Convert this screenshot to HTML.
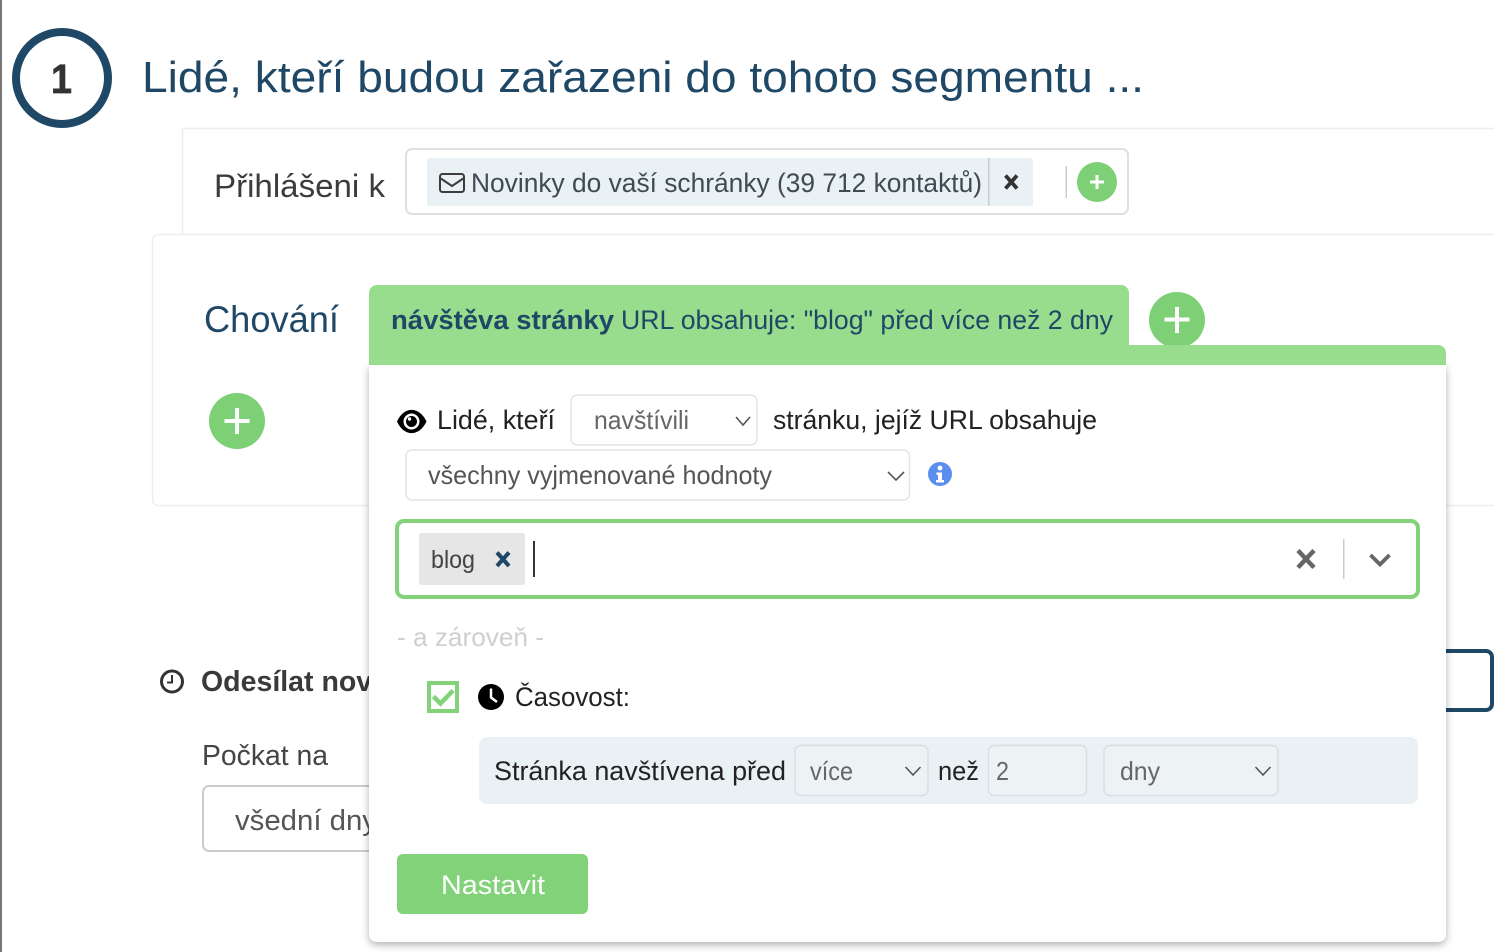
<!DOCTYPE html>
<html lang="cs">
<head>
<meta charset="utf-8">
<title>Segment</title>
<style>
html,body{margin:0;padding:0;background:#fff;width:1494px;height:952px;overflow:hidden}
svg{display:block}
text{font-family:"Liberation Sans",sans-serif}
</style>
</head>
<body>
<svg xmlns="http://www.w3.org/2000/svg" width="1494" height="952" viewBox="0 0 1494 952">
<defs>
<filter id="sh" x="-5%" y="-5%" width="110%" height="110%">
<feDropShadow dx="0" dy="3" stdDeviation="4" flood-color="#000" flood-opacity=".3"/>
</filter>
</defs>
<rect width="1494" height="952" fill="#fff"/>
<rect x="0" y="0" width="2" height="952" fill="#777"/>

<circle cx="62" cy="78" r="46" fill="none" stroke="#1f4766" stroke-width="8"/>
<text x="51" y="93" font-size="41" font-weight="700" fill="#333" stroke="#333" stroke-width=".7" textLength="21" lengthAdjust="spacingAndGlyphs">1</text>
<text x="142" y="92" font-size="44" fill="#1f4766" textLength="1002" lengthAdjust="spacingAndGlyphs">Lidé, kteří budou zařazeni do tohoto segmentu ...</text>

<path d="M1494 128.500H182.500V234" fill="none" stroke="#eee" stroke-width="1.500"/>
<text x="214" y="197" font-size="32" fill="#3c3c3c" textLength="171" lengthAdjust="spacingAndGlyphs">Přihlášeni k</text>
<rect x="406" y="149" width="722" height="65" rx="6" fill="#fff" stroke="#e0e0e0" stroke-width="2"/>
<rect x="427" y="158" width="606" height="48" rx="2" fill="#e9f1f4"/>
<rect x="988" y="158" width="1.500" height="48" fill="#c5ccd0"/>
<rect x="440" y="174" width="24" height="18" rx="2.500" fill="none" stroke="#3c3c3c" stroke-width="2"/>
<path d="M440 178l12 8 12-8" fill="none" stroke="#3c3c3c" stroke-width="2"/>
<text x="471" y="192" font-size="27" fill="#3f4a52" textLength="511" lengthAdjust="spacingAndGlyphs">Novinky do vaší schránky (39 712 kontaktů)</text>
<path d="M1005.500 175.500l11.500 13M1017 175.500l-11.500 13" stroke="#333" stroke-width="3.800" fill="none"/>
<rect x="1065.500" y="166" width="1.500" height="32" fill="#ccc"/>
<circle cx="1097" cy="182" r="20" fill="#7dd075"/>
<path d="M1097 175v14M1090 182h14" stroke="#fff" stroke-width="3" fill="none"/>

<path d="M1494 234.500H158a5.500 5.500 0 0 0-5.500 5.500V500a5.500 5.500 0 0 0 5.500 5.500H1494" fill="#fff" stroke="#eee" stroke-width="1.500"/>
<text x="204" y="332" font-size="37" fill="#1f4766" textLength="135" lengthAdjust="spacingAndGlyphs">Chování</text>
<circle cx="237" cy="421" r="28" fill="#7dd075"/>
<path d="M237 408v26M224.500 421h25" stroke="#fff" stroke-width="4" fill="none"/>

<circle cx="172" cy="681.500" r="10.500" fill="none" stroke="#333" stroke-width="3"/>
<path d="M172 675v7.500h-5" fill="none" stroke="#333" stroke-width="2"/>
<text x="201" y="691" font-size="29" font-weight="700" fill="#3a3a3a" textLength="206" lengthAdjust="spacingAndGlyphs">Odesílat novou</text>
<text x="202" y="765" font-size="29" fill="#444" textLength="126" lengthAdjust="spacingAndGlyphs">Počkat na</text>
<rect x="203" y="786" width="260" height="65" rx="6" fill="#fff" stroke="#ccc" stroke-width="2"/>
<text x="235" y="830" font-size="29" fill="#555" textLength="142" lengthAdjust="spacingAndGlyphs">všední dny</text>

<rect x="1400" y="651" width="92" height="59" rx="6" fill="#fff" stroke="#1f4766" stroke-width="4"/>

<circle cx="1177" cy="320" r="28" fill="#7dd075"/>
<path d="M1177 307v26M1164.500 319.500h25" stroke="#fff" stroke-width="4" fill="none"/>

<path d="M369 365H1446V934a8 8 0 0 1-8 8H377a8 8 0 0 1-8-8Z" fill="#fff" filter="url(#sh)"/>
<path d="M369 365V293a8 8 0 0 1 8-8H1121a8 8 0 0 1 8 8V345H1438a8 8 0 0 1 8 8V365Z" fill="#98dc8d"/>
<text x="391" y="329" font-size="27" font-weight="700" fill="#1f4766" textLength="223" lengthAdjust="spacingAndGlyphs">návštěva stránky</text>
<text x="621" y="329" font-size="27" fill="#1f4766" textLength="492" lengthAdjust="spacingAndGlyphs">URL obsahuje: "blog" před více než 2 dny</text>

<path d="M397 421.500C404 406 419 406 426.500 421.500C419 437 404 437 397 421.500Z" fill="#000"/>
<circle cx="411.500" cy="421.500" r="8" fill="#fff"/>
<circle cx="411.500" cy="421.500" r="5.500" fill="#000"/>
<circle cx="409.500" cy="419" r="1.700" fill="#fff"/>
<text x="437" y="429" font-size="27" fill="#222" textLength="118" lengthAdjust="spacingAndGlyphs">Lidé, kteří</text>
<rect x="571" y="395" width="186" height="50" rx="6" fill="#fff" stroke="#e4e4e4" stroke-width="1.500"/>
<text x="594" y="429" font-size="26" fill="#666" textLength="95" lengthAdjust="spacingAndGlyphs">navštívili</text>
<path d="M736 417l7 8 7-8" fill="none" stroke="#555" stroke-width="1.600"/>
<text x="773" y="429" font-size="27" fill="#222" textLength="324" lengthAdjust="spacingAndGlyphs">stránku, jejíž URL obsahuje</text>

<rect x="406" y="450" width="503.500" height="50" rx="6" fill="#fff" stroke="#e4e4e4" stroke-width="1.500"/>
<text x="428" y="484" font-size="26" fill="#555" textLength="344" lengthAdjust="spacingAndGlyphs">všechny vyjmenované hodnoty</text>
<path d="M888 472l8 8 8-8" fill="none" stroke="#555" stroke-width="1.600"/>
<circle cx="940" cy="474" r="12" fill="#5b8def"/>
<circle cx="940" cy="468" r="2.500" fill="#fff"/>
<path d="M936.500 472.500h5.500v7.500h2v2.500h-8v-2.500h2v-5h-1.500Z" fill="#fff"/>

<rect x="397" y="521" width="1021" height="76" rx="7" fill="#fff" stroke="#82d279" stroke-width="4"/>
<rect x="419" y="533" width="106" height="52" rx="3" fill="#e6e6e6"/>
<text x="431" y="568" font-size="25" fill="#444" textLength="44" lengthAdjust="spacingAndGlyphs">blog</text>
<path d="M497 552.500l12 13.500M509 552.500l-12 13.500" stroke="#1f4766" stroke-width="4" fill="none"/>
<rect x="533" y="541" width="2" height="36" fill="#333"/>
<path d="M1298 550.500l16 17M1314 550.500l-16 17" stroke="#666" stroke-width="4.500" fill="none"/>
<rect x="1343" y="539" width="1.500" height="40" fill="#ccc"/>
<path d="M1370.500 555l9.500 9.500 9.500-9.500" stroke="#666" stroke-width="3.800" fill="none"/>

<text x="397" y="646" font-size="26" fill="#cfcfcf" textLength="147" lengthAdjust="spacingAndGlyphs">- a zároveň -</text>

<rect x="429" y="683" width="28" height="28" fill="#fff" stroke="#82d279" stroke-width="4"/>
<path d="M433.500 696.500l7 7 12.500-13" fill="none" stroke="#82d279" stroke-width="4.500"/>
<circle cx="491" cy="697" r="13" fill="#000"/>
<path d="M491 688.500v9l6 4.500" fill="none" stroke="#fff" stroke-width="2.500"/>
<text x="515" y="706" font-size="27" fill="#222" textLength="115" lengthAdjust="spacingAndGlyphs">Časovost:</text>

<rect x="479" y="737" width="939" height="67" rx="8" fill="#e9f1f4"/>
<text x="494" y="780" font-size="27" fill="#222" textLength="292" lengthAdjust="spacingAndGlyphs">Stránka navštívena před</text>
<rect x="795" y="745.500" width="133" height="50" rx="6" fill="#edf3f5" stroke="#d8dfe2" stroke-width="1.500"/>
<text x="810" y="780" font-size="26" fill="#666" textLength="43" lengthAdjust="spacingAndGlyphs">více</text>
<path d="M905.500 767l7.500 8 7.500-8" fill="none" stroke="#555" stroke-width="1.600"/>
<text x="938" y="780" font-size="27" fill="#222" textLength="41" lengthAdjust="spacingAndGlyphs">než</text>
<rect x="988.500" y="745.500" width="98" height="50" rx="6" fill="#edf3f5" stroke="#d8dfe2" stroke-width="1.500"/>
<text x="996" y="780" font-size="26" fill="#666" textLength="13" lengthAdjust="spacingAndGlyphs">2</text>
<rect x="1104" y="745.500" width="174" height="50" rx="6" fill="#edf3f5" stroke="#d8dfe2" stroke-width="1.500"/>
<text x="1120" y="780" font-size="26" fill="#666" textLength="40" lengthAdjust="spacingAndGlyphs">dny</text>
<path d="M1255.500 767l7.500 8 7.500-8" fill="none" stroke="#555" stroke-width="1.600"/>

<rect x="397" y="854" width="191" height="60" rx="6" fill="#82d279"/>
<text x="441" y="894" font-size="27" fill="#fff" textLength="104" lengthAdjust="spacingAndGlyphs">Nastavit</text>
</svg>
</body>
</html>
